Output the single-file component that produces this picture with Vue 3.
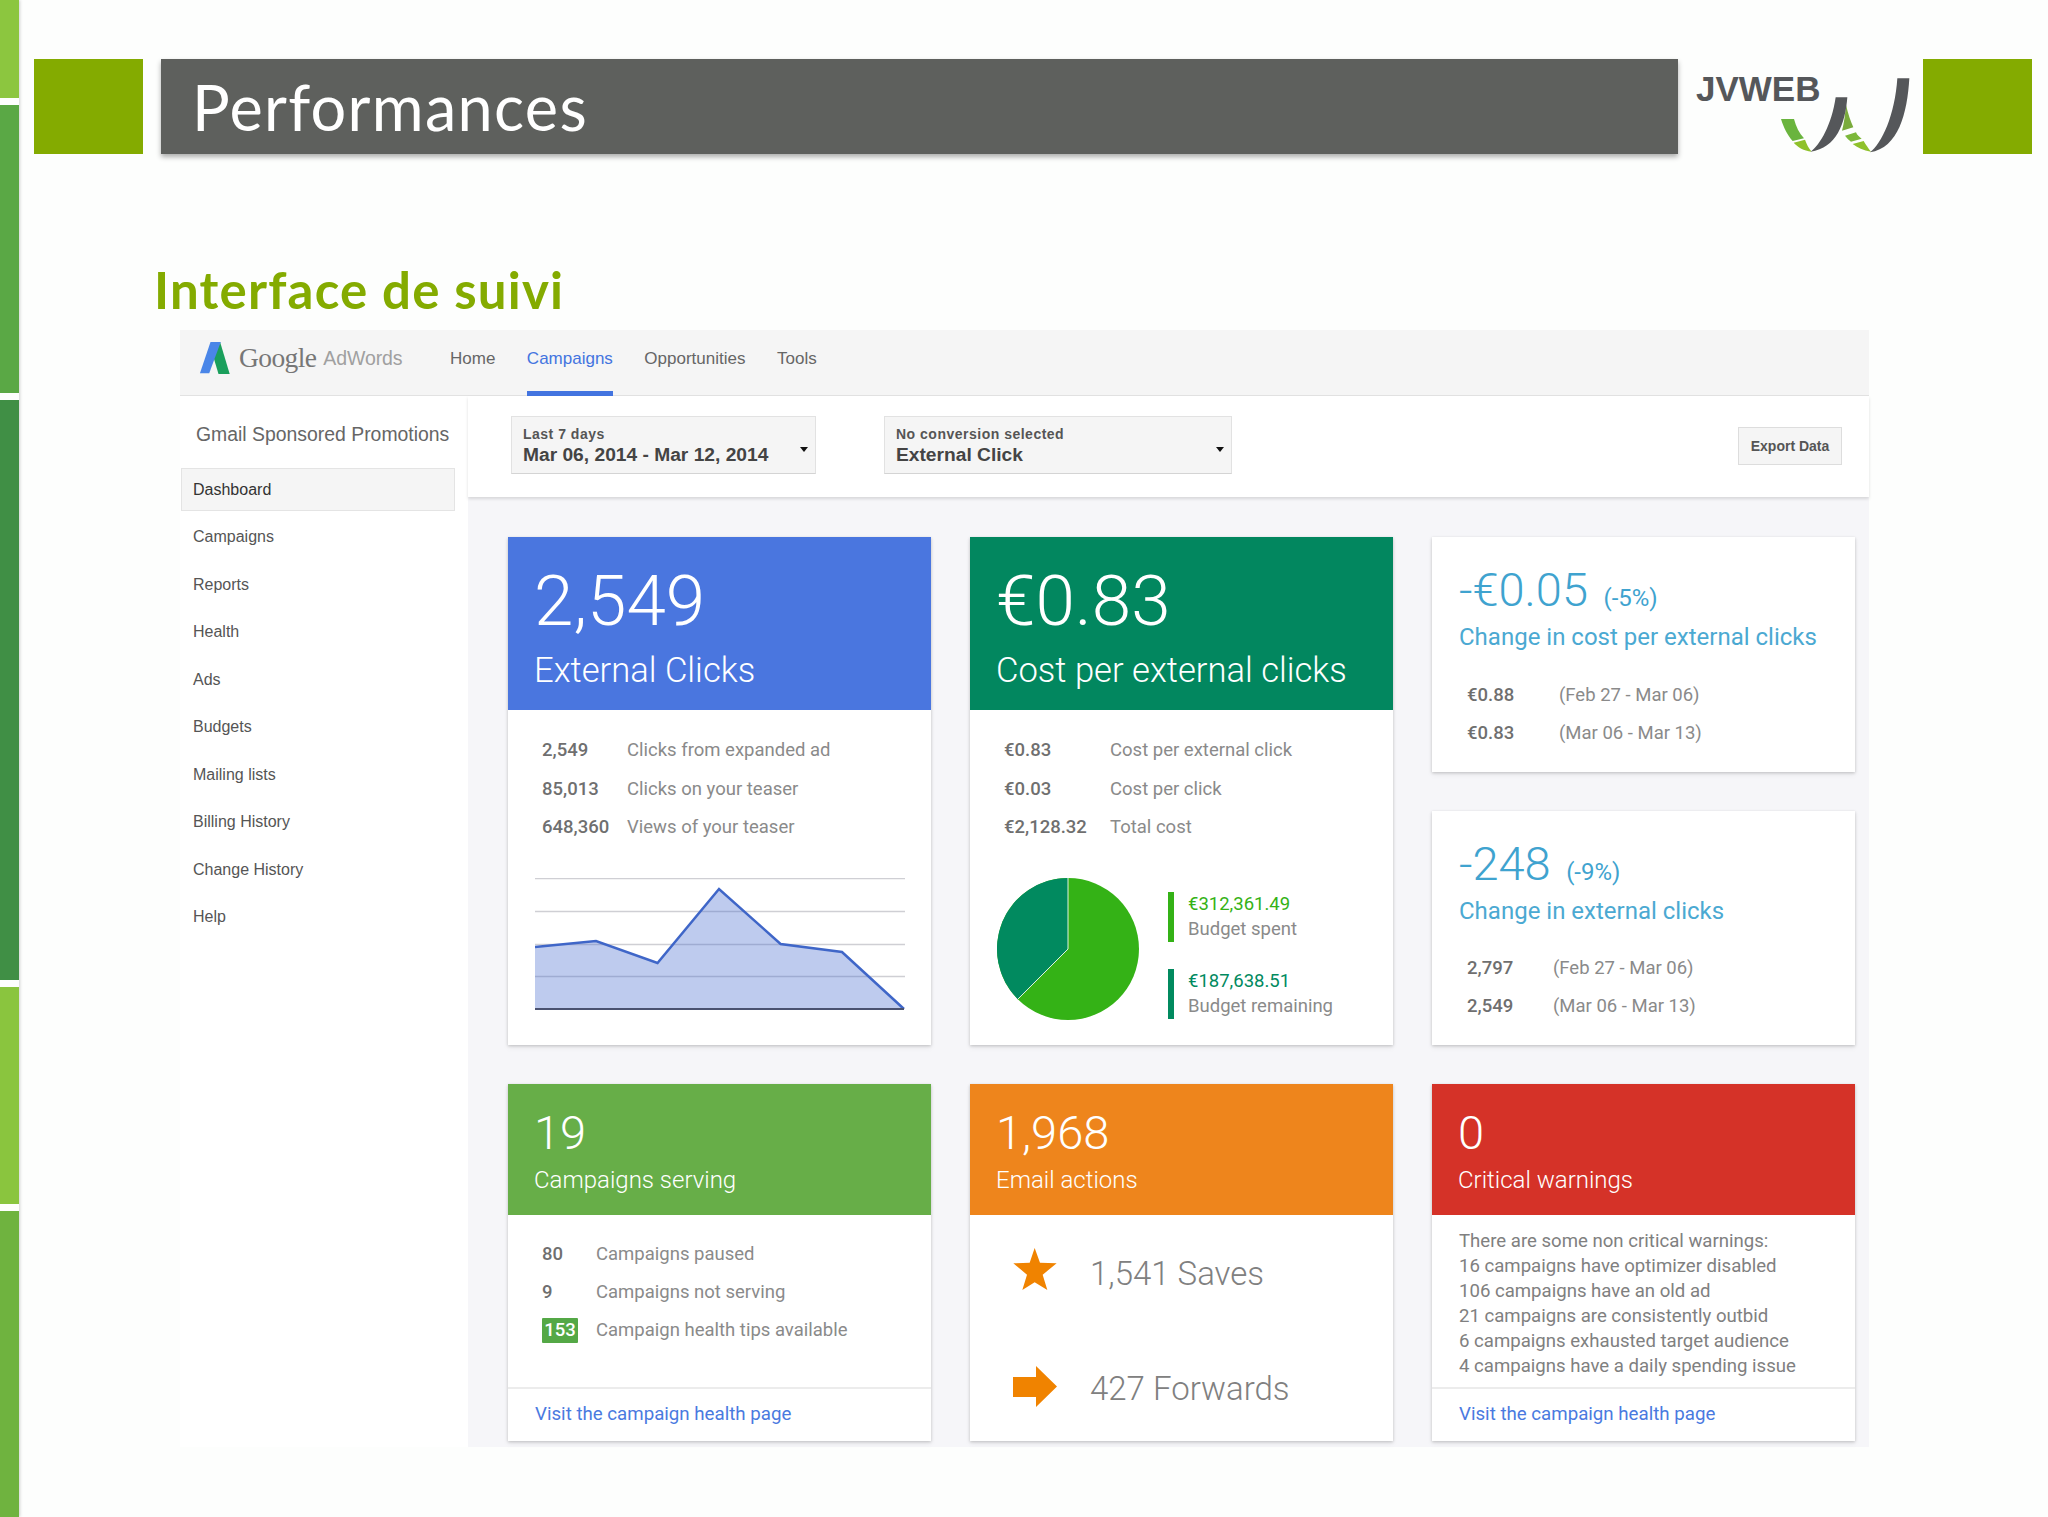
<template>
  <div class="page">
    <div class="strip">
      <i v-for="s in strip" :key="s.c" :style="{ height: s.h + 'px', background: s.c }"></i>
    </div>
    <div class="slide">
      <header class="head">
        <div class="square"></div>
        <div class="bar"><h1>Performances</h1></div>
        <div class="jv">
          <span class="jvtext">JVWEB</span>
          <svg class="jvmark" viewBox="0 0 450 270" width="150" height="90">
            <path fill="#6ab43e" d="M33 147H72C78 170 88 190 102 205L68 213C52 195 42 175 33 147Z" />
            <path fill="#8fc12b" d="M71 218L105 209C110 222 116 235 125 245C100 242 85 232 71 218Z" />
            <path fill="#7aab3c" d="M228 105C234 130 242 155 250 172L216 182C222 160 226 130 228 105Z" />
            <path fill="#7cb83a" d="M225 197L258 187C261 195 268 201 275 206L243 215C236 210 230 204 225 197Z" />
            <path fill="#8fc12b" d="M248 222L281 213C288 225 295 235 303 245C280 242 262 233 248 222Z" />
            <path fill="#55575a" d="M197 82H232C226 160 200 235 122 245C150 225 185 165 197 82Z" />
            <path fill="#55575a" d="M382 25H418C412 130 385 235 300 247C335 222 375 135 382 25Z" />
          </svg>
        </div>
        <div class="square"></div>
      </header>

      <h2 class="subtitle">Interface de suivi</h2>

      <section class="shot">
        <nav class="topnav">
          <div class="brand">
            <svg viewBox="25 18 95 100" width="31" height="32">
              <path fill="#1a9f5c" d="M90 18L120 118H85L70 68Z" />
              <path fill="#4a86e8" d="M60 18H92L56 116H27Z" />
            </svg>
            <span class="google">Google</span>
            <span class="adwords">AdWords</span>
          </div>
          <a v-for="t in tabs" :key="t" class="tab" :class="{ on: t === 'Campaigns' }">{{ t }}</a>
        </nav>

        <div class="body">
          <aside class="side">
            <div class="account">Gmail Sponsored Promotions</div>
            <ul>
              <li v-for="m in menu" :key="m"><a :class="{ on: m === 'Dashboard' }">{{ m }}</a></li>
            </ul>
          </aside>

          <main class="main">
            <div class="filters">
              <div class="select first">
                <small>Last 7 days</small>
                <strong>Mar 06, 2014 - Mar 12, 2014</strong>
                <i class="caret"></i>
              </div>
              <div class="select second">
                <small>No conversion selected</small>
                <strong>External Click</strong>
                <i class="caret"></i>
              </div>
              <button class="export">Export Data</button>
            </div>

            <div class="grid">
              <article class="card">
                <div class="hd big blue">
                  <div class="num">2,549</div>
                  <div class="lbl">External Clicks</div>
                </div>
                <div class="rows">
                  <div v-for="r in clicks" :key="r[1]" class="row w85"><b>{{ r[0] }}</b><span>{{ r[1] }}</span></div>
                </div>
                <svg class="chart" viewBox="0 0 370 133" width="370" height="133">
                  <path v-for="y in [0.5, 33.5, 66.5, 98.5]" :key="y" :d="`M0 ${y}H370`" stroke="#cfcfd4" stroke-width="1.5" fill="none" />
                  <path fill="#4a6fcf" fill-opacity=".36" d="M0 69L61 63L122.500 85L184 11L245.600 66L307 74L369 131H0Z" />
                  <path fill="none" stroke="#3f66c8" stroke-width="2.500" d="M0 69L61 63L122.500 85L184 11L245.600 66L307 74L369 131" />
                  <path d="M0 131H369" stroke="#4a5270" stroke-width="2" fill="none" />
                </svg>
              </article>

              <article class="card">
                <div class="hd big teal">
                  <div class="num">€0.83</div>
                  <div class="lbl">Cost per external clicks</div>
                </div>
                <div class="rows">
                  <div v-for="r in costs" :key="r[1]" class="row w106"><b>{{ r[0] }}</b><span>{{ r[1] }}</span></div>
                </div>
                <div class="budget">
                  <svg viewBox="0 0 142 142" width="142" height="142">
                    <circle cx="71" cy="71" r="71" fill="#34b216" />
                    <path fill="#018a5f" d="M71 71L20.800 121.200A71 71 0 0 1 71 0Z" />
                    <path fill="none" stroke="#dff3df" stroke-width="1" d="M71 0V71L20.800 121.200" />
                  </svg>
                  <div class="legend">
                    <div v-for="l in legend" :key="l.n" class="leg" :class="l.k">
                      <div class="amt">{{ l.a }}</div>
                      <div class="nm">{{ l.n }}</div>
                    </div>
                  </div>
                </div>
              </article>

              <div class="stack">
                <article v-for="c in changes" :key="c.title" class="card change">
                  <div class="delta">{{ c.delta }} <small>{{ c.pct }}</small></div>
                  <div class="ctitle">{{ c.title }}</div>
                  <div class="crows">
                    <div v-for="r in c.rows" :key="r[1]" class="row" :class="c.w"><b>{{ r[0] }}</b><span>{{ r[1] }}</span></div>
                  </div>
                </article>
              </div>

              <article class="card">
                <div class="hd small lime">
                  <div class="num">19</div>
                  <div class="lbl">Campaigns serving</div>
                </div>
                <div class="rows fill tight">
                  <div class="row w54"><b>80</b><span>Campaigns paused</span></div>
                  <div class="row w54"><b>9</b><span>Campaigns not serving</span></div>
                  <div class="row w54"><b class="badge">153</b><span>Campaign health tips available</span></div>
                </div>
                <a class="foot">Visit the campaign health page</a>
              </article>

              <article class="card">
                <div class="hd small orange">
                  <div class="num">1,968</div>
                  <div class="lbl">Email actions</div>
                </div>
                <div class="email">
                  <div class="act">
                    <svg class="star" viewBox="38 22 130 126" width="44" height="42"><path fill="#f08300" d="M102 22L118 66L168 68L126 102L140 148L102 125L65 148L79 102L38 68L87 66Z" /></svg>
                    <span>1,541 Saves</span>
                  </div>
                  <div class="act">
                    <svg class="arrow" viewBox="0 0 44 41" width="44" height="41"><path fill="#f08300" d="M0 11H23V0L44 20.500L23 41V31H0Z" /></svg>
                    <span>427 Forwards</span>
                  </div>
                </div>
              </article>

              <article class="card">
                <div class="hd small red">
                  <div class="num">0</div>
                  <div class="lbl">Critical warnings</div>
                </div>
                <div class="warn fill">
                  <div v-for="w in warnings" :key="w">{{ w }}</div>
                </div>
                <a class="foot">Visit the campaign health page</a>
              </article>
            </div>
          </main>
        </div>
      </section>
    </div>
  </div>
</template>

<script setup>
const strip = [
  { h: 98, c: '#8cc63f' },
  { h: 288, c: '#5aa845' },
  { h: 580, c: '#408f45' },
  { h: 217, c: '#8ac53e' },
  { h: 307, c: '#6fb33f' }
]
const tabs = ['Home', 'Campaigns', 'Opportunities', 'Tools']
const menu = ['Dashboard', 'Campaigns', 'Reports', 'Health', 'Ads', 'Budgets', 'Mailing lists', 'Billing History', 'Change History', 'Help']
const clicks = [
  ['2,549', 'Clicks from expanded ad'],
  ['85,013', 'Clicks on your teaser'],
  ['648,360', 'Views of your teaser']
]
const costs = [
  ['€0.83', 'Cost per external click'],
  ['€0.03', 'Cost per click'],
  ['€2,128.32', 'Total cost']
]
const legend = [
  { a: '€312,361.49', n: 'Budget spent', k: 'lg' },
  { a: '€187,638.51', n: 'Budget remaining', k: 'dk' }
]
const changes = [
  {
    delta: '-€0.05', pct: '(-5%)', title: 'Change in cost per external clicks', w: 'w92',
    rows: [['€0.88', '(Feb 27 - Mar 06)'], ['€0.83', '(Mar 06 - Mar 13)']]
  },
  {
    delta: '-248', pct: '(-9%)', title: 'Change in external clicks', w: 'w86',
    rows: [['2,797', '(Feb 27 - Mar 06)'], ['2,549', '(Mar 06 - Mar 13)']]
  }
]
const warnings = [
  'There are some non critical warnings:',
  '16 campaigns have optimizer disabled',
  '106 campaigns have an old ad',
  '21 campaigns are consistently outbid',
  '6 campaigns exhausted target audience',
  '4 campaigns have a daily spending issue'
]
</script>

<style>
html, body { margin: 0; background: #fdfefd; }
</style>

<style scoped>
.page { width: 2048px; height: 1517px; overflow: hidden; display: flex; background: #fdfefd; font-family: Roboto, "Liberation Sans", sans-serif; }
.strip { width: 19px; flex: none; display: flex; flex-direction: column; gap: 7px; box-shadow: 1px 0 3px rgba(0,0,0,.18); }
.strip i { display: block; flex: none; }
.slide { flex: 1; padding: 59px 16px 0 15px; box-sizing: border-box; min-width: 0; }

.head { display: flex; height: 95px; }
.square { width: 109px; flex: none; background: #84ab00; }
.bar { margin-left: 18px; flex: 1; background: #5e605d; box-shadow: 0 3px 5px rgba(0,0,0,.32); display: flex; align-items: center; padding-left: 31px; }
.bar h1 { margin: 0; font: 400 63px/95px Lato, "Open Sans", sans-serif; color: #fff; letter-spacing: 1.300px; }
.jv { width: 245px; flex: none; position: relative; }
.jvtext { position: absolute; left: 18px; top: 11px; font: 700 35px/38px "Liberation Sans", sans-serif; letter-spacing: 0; color: #55575a; }
.jvmark { position: absolute; left: 92px; top: 11px; }

.subtitle { margin: 106px 0 0 120px; font: 700 51px/60px Lato, "Open Sans", sans-serif; color: #84ab00; letter-spacing: 1.200px; }

.shot { margin: 10px 0 0 146px; width: 1689px; }
.topnav { height: 66px; box-sizing: border-box; background: #f5f5f5; border-bottom: 1px solid #e2e2e2; display: flex; font: 17px "Liberation Sans", sans-serif; color: #666; }
.brand { width: 270px; flex: none; display: flex; align-items: center; box-sizing: border-box; padding-left: 19px; height: 56px; }
.google { font: 27.500px "Liberation Serif", serif; color: #777; margin-left: 9px; letter-spacing: -.6px; }
.adwords { font: 19.500px "Liberation Sans", sans-serif; color: #a0a0a0; margin-left: 7px; letter-spacing: -.1px; }
.tab { margin-right: 31.500px; padding-top: 19px; line-height: 20px; box-sizing: border-box; height: 66px; }
.tab.on { color: #4374e0; border-bottom: 5px solid #4374e0; }

.body { display: flex; }
.side { width: 288px; flex: none; background: #fff; }
.account { padding: 26px 0 0 16px; font: 19.400px/24px "Liberation Sans", sans-serif; color: #666; height: 43.800px; }
.side ul { list-style: none; margin: 0; padding: 0; font: 16px "Liberation Sans", sans-serif; color: #555; }
.side li { height: 47.500px; display: flex; align-items: center; }
.side a { display: flex; align-items: center; height: 43px; box-sizing: border-box; width: 274px; margin-left: 1px; padding-left: 11px; border: 1px solid transparent; }
.side a.on { background: #f5f5f5; border-color: #e4e4e4; color: #333; }

.main { flex: 1; background: #f6f6f9; padding-bottom: 6px; }
.filters { height: 101px; box-sizing: border-box; background: #fff; box-shadow: 0 2px 3px rgba(0,0,0,.13); display: flex; align-items: flex-start; padding: 20px 27px 0 43px; font-family: "Liberation Sans", sans-serif; }
.select { position: relative; height: 58px; box-sizing: border-box; background: #f5f5f5; border: 1px solid #e2e2e2; border-bottom-color: #d4d4d4; padding: 8px 0 0 11px; display: flex; flex-direction: column; color: #444; }
.select.first { width: 305px; }
.select.second { width: 348px; margin-left: 68px; }
.select small { font: 700 14px/18px "Liberation Sans", sans-serif; color: #555; letter-spacing: .5px; }
.select strong { font: 700 19.200px/23px "Liberation Sans", sans-serif; color: #444; }
.caret { position: absolute; right: 7px; top: 30px; border: 4.500px solid transparent; border-top: 5px solid #111; border-bottom: 0; }
.export { margin: 11px 0 0 auto; width: 104px; height: 38px; background: #f5f5f5; border: 1px solid #ddd; font: 700 14px "Liberation Sans", sans-serif; color: #555; padding: 0; }

.grid { display: grid; grid-template-columns: repeat(3, 423px); column-gap: 39px; row-gap: 39px; grid-template-rows: 508px 357px; padding: 40px 0 0 40px; }
.card { background: #fff; box-shadow: 0 1px 3px rgba(0,0,0,.2), 0 3px 6px rgba(0,0,0,.05); display: flex; flex-direction: column; min-height: 0; }
.hd { color: #fff; padding-left: 26px; box-sizing: border-box; flex: none; font-weight: 300; }
.hd.big { height: 173px; padding-top: 34px; }
.hd.big .num { font-size: 71px; line-height: 60px; }
.hd.big .lbl { font-size: 34.600px; line-height: 40px; margin-top: 18.500px; }
.hd.small { height: 130.500px; padding-top: 24px; }
.hd.small .num { font-size: 47px; line-height: 50px; }
.hd.small .lbl { font-size: 24px; line-height: 32px; margin-top: 6px; }
.blue { background: #4a76df; }
.teal { background: #02875f; }
.lime { background: #67ae48; }
.orange { background: #ee851c; }
.red { background: #d53228; }

.rows { padding: 21px 0 0 34px; font-size: 18.500px; }
.rows.tight { padding-top: 20px; }
.row { display: flex; align-items: center; height: 38.400px; color: #8a8a8a; font-size: 18.500px; }
.row b { font-weight: 500; color: #6f6f6f; flex: none; }
.w85 b { width: 85px; }
.w106 b { width: 106px; }
.w54 b { width: 54px; }
.w92 b { width: 92px; }
.w86 b { width: 86px; }
.row b.badge { width: 36px; height: 25px; margin-right: 18px; background: #54a846; color: #fff; text-align: center; line-height: 25px; border-radius: 1px; }

.chart { margin: 32px 0 0 27px; display: block; }
.budget { display: flex; margin: 32px 0 0 27px; }
.legend { margin: 14px 0 0 29px; display: flex; flex-direction: column; gap: 27px; }
.leg { height: 50px; border-left: 6.500px solid; padding-left: 14px; box-sizing: border-box; font-size: 18.500px; line-height: 25px; }
.leg .nm { color: #8a8a8a; }
.leg.lg { border-color: #34b216; }
.leg.lg .amt { color: #34b216; }
.leg.dk { border-color: #018a5f; }
.leg.dk .amt { color: #018a5f; }

.stack { display: flex; flex-direction: column; gap: 39px; }
.change { flex: 1; box-sizing: border-box; padding: 27px 0 0 27px; }
.delta { font-size: 47px; line-height: 52px; color: #3fa3cf; font-weight: 300; }
.delta small { font-size: 24px; font-weight: 400; margin-left: 4px; }
.ctitle { font-size: 24px; line-height: 32px; color: #4ba9d2; margin-top: -3px; }
.crows { margin: 22.500px 0 0 8px; }
.crows .row { height: 38px; }

.fill { flex: 1; }
.foot { flex: none; height: 54px; box-sizing: border-box; border-top: 2px solid #ececec; padding-left: 27px; line-height: 50px; font-size: 18.700px; color: #4a7adf; }
.email { flex: 1; padding-top: 1px; }
.act { height: 115px; display: flex; align-items: center; padding-left: 43px; }
.act svg { flex: none; }
.star { margin-bottom: 9px; }
.arrow { margin-bottom: 4px; }
.act span { margin-left: 33px; font-size: 33px; font-weight: 300; color: #808080; }
.warn { padding: 14.500px 0 0 27px; font-size: 18.600px; line-height: 25px; color: #808080; }
</style>
